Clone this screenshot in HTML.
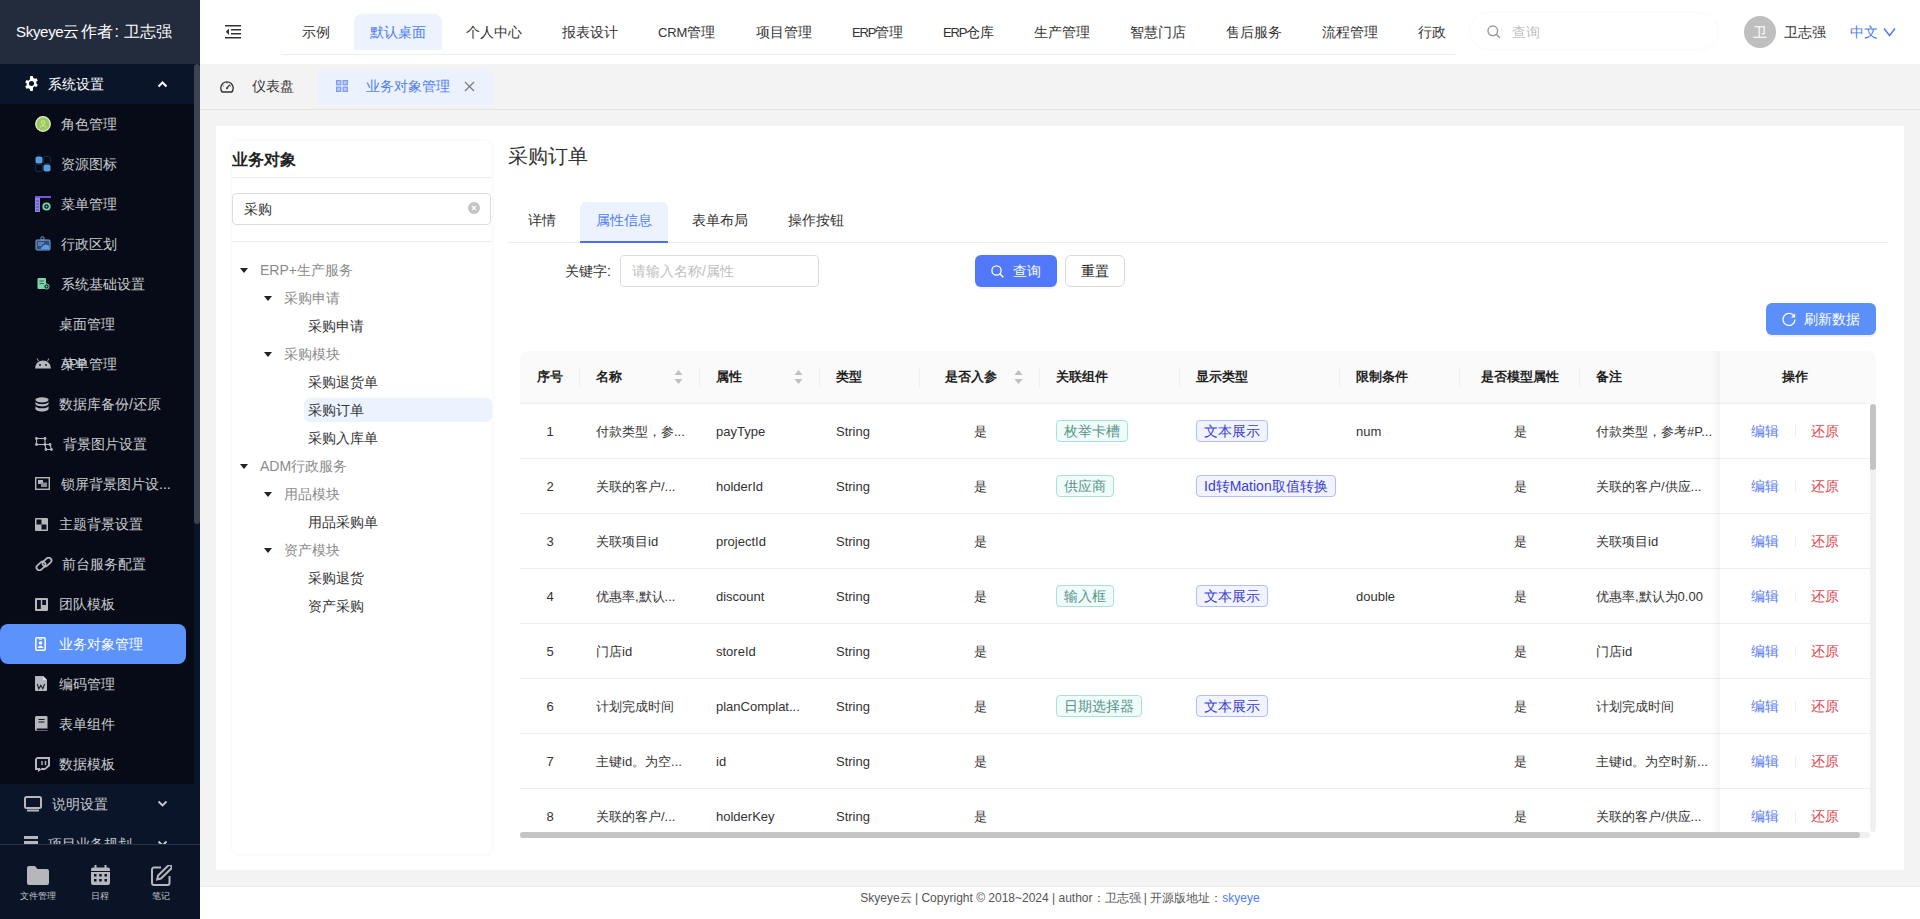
<!DOCTYPE html>
<html><head><meta charset="utf-8">
<style>
*{box-sizing:border-box;margin:0;padding:0}
html,body{width:1920px;height:919px;overflow:hidden;background:#f3f3f3;font-family:"Liberation Sans",sans-serif;font-size:14px;color:#333}
.a{position:absolute}
.t{position:absolute;white-space:nowrap;line-height:20px}
/* sidebar */
#side{position:absolute;left:0;top:0;width:200px;height:919px;background:#0a1529;overflow:hidden}
#logo{position:absolute;left:0;top:0;width:200px;height:64px;background:#232c3d;color:#fff;font-size:16px;line-height:64px;padding-left:16px;white-space:nowrap}
.sub{position:absolute;left:0;width:194px;background:#060b17}
.mi{position:absolute;left:0;width:194px;height:40px;color:#c9cbd0;font-size:14px;line-height:40px;white-space:nowrap}
.mi svg{position:absolute}
.mi span{position:absolute;top:0}
#sbthumb{position:absolute;left:194px;top:64px;width:6px;height:460px;background:#3c4350;border-radius:3px}
#sbot{position:absolute;left:0;top:844px;width:200px;height:75px;background:#0b1426;border-top:1px solid #283243}
.bi{position:absolute;top:21px;width:40px;text-align:center;color:#c3c6cc;font-size:9px}
/* header */
#hdr{position:absolute;left:200px;top:0;width:1720px;height:64px;background:#fff}
.nav{position:absolute;top:22px;font-size:14px;color:#333;line-height:20px;white-space:nowrap}
#tabs{position:absolute;left:200px;top:64px;width:1720px;height:46px;background:#f3f3f3;border-bottom:1px solid #e4e4e4}
#panel{position:absolute;left:216px;top:126px;width:1688px;height:744px;background:#fff}
#foot{position:absolute;left:200px;top:886px;width:1720px;height:33px;background:#fff;border-top:1px solid #ececec;text-align:center;font-size:12px;color:#555;line-height:22px}
</style></head>
<body>
<div id="side">
  <div id="logo"><span style="font-size:15px;letter-spacing:-.3px">Skyeye</span>云<span style="display:inline-block;width:2px"></span>作者<span style="display:inline-block;width:11px;padding-left:1px">:</span>卫志强</div>
  <!-- 系统设置 header -->
  <div class="mi" style="top:64px;color:#fff">
    <svg style="left:24px;top:12px" width="15" height="15" viewBox="0 0 16 16"><path fill="#fff" d="M6.6 0h2.8l.4 2.1a6 6 0 0 1 1.5.9l2-.7 1.4 2.4-1.6 1.4a6 6 0 0 1 0 1.8l1.6 1.4-1.4 2.4-2-.7a6 6 0 0 1-1.5.9L9.4 16H6.6l-.4-2.1a6 6 0 0 1-1.5-.9l-2 .7L1.3 11.3l1.6-1.4a6 6 0 0 1 0-1.8L1.3 6.7l1.4-2.4 2 .7a6 6 0 0 1 1.5-.9zM8 5.3a2.7 2.7 0 1 0 0 5.4 2.7 2.7 0 0 0 0-5.4z"/></svg>
    <span style="left:48px">系统设置</span>
    <svg style="left:157px;top:16px" width="11" height="8" viewBox="0 0 11 8"><path d="M1.5 6.5 5.5 2.5 9.5 6.5" stroke="#fff" stroke-width="2" fill="none"/></svg>
  </div>
  <div class="sub" style="top:104px;height:680px"></div>
  <div class="mi" style="top:104px"><svg style="left:35px;top:12px" width="16" height="16" viewBox="0 0 16 16"><circle cx="8" cy="8" r="7.3" fill="#9cc95c" stroke="#e8f2dc" stroke-width="1.2"/><circle cx="8" cy="6.5" r="1.8" fill="none" stroke="#dfeccb" stroke-width=".8"/><path d="M4.8 11.5q3.2-4 6.4 0" fill="none" stroke="#dfeccb" stroke-width=".8"/></svg><span style="left:61px">角色管理</span></div>
  <div class="mi" style="top:144px"><svg style="left:35px;top:12px" width="16" height="16" viewBox="0 0 16 16"><rect x=".5" y=".5" width="7" height="7" rx="2" fill="#5a9be0"/><rect x="8.5" y="8.5" width="7" height="7" rx="2" fill="#5a9be0"/><rect x="8.5" y=".5" width="7" height="7" rx="2" fill="none" stroke="#1f3350" stroke-width=".8"/><rect x=".5" y="8.5" width="7" height="7" rx="2" fill="none" stroke="#1f3350" stroke-width=".8"/></svg><span style="left:61px">资源图标</span></div>
  <div class="mi" style="top:184px"><svg style="left:35px;top:12px" width="16" height="16" viewBox="0 0 16 16"><rect x="0" y="0" width="16" height="2" fill="#7a55e0"/><rect x="0" y="2" width="5" height="14" fill="#8a86e8"/><path d="M1 5h3M1 8h3M1 11h3M1 14h3" stroke="#3b3b8c" stroke-width=".8"/><circle cx="11.5" cy="10.5" r="3.2" fill="none" stroke="#7ed6b2" stroke-width="1.8"/><circle cx="11.5" cy="10.5" r="1" fill="#7ed6b2"/></svg><span style="left:61px">菜单管理</span></div>
  <div class="mi" style="top:224px"><svg style="left:35px;top:12px" width="16" height="16" viewBox="0 0 16 16"><rect x="1" y="4" width="14" height="10" rx="1" fill="#2f4f7a" stroke="#7fa8e0" stroke-width="1"/><path d="M6 1h3v3H6z" fill="none" stroke="#7fa8e0" stroke-width=".8"/><path d="M6 12q4-6 8-2v3H6z" fill="#5b9ef0"/><path d="M3 7h6M3 9h4" stroke="#a8c6ef" stroke-width=".8"/></svg><span style="left:61px">行政区划</span></div>
  <div class="mi" style="top:264px"><svg style="left:37px;top:14px" width="13" height="12" viewBox="0 0 13 12"><rect x=".5" y="0" width="8.5" height="11" rx="1" fill="#7fd3ad"/><path d="M2.5 3h4.5M2.5 5.5h4.5" stroke="#2a5a48" stroke-width=".9"/><circle cx="9.5" cy="8.5" r="2.6" fill="#0f2a25" stroke="#7fd3ad" stroke-width="1"/><circle cx="9.5" cy="8.5" r=".9" fill="#7fd3ad"/></svg><span style="left:61px">系统基础设置</span></div>
  <div class="mi" style="top:304px"><span style="left:59px">桌面管理</span></div>
  <div class="mi" style="top:344px"><svg style="left:35px;top:14px" width="16" height="11" viewBox="0 0 16 11"><path d="M0 10.5A8 8 0 0 1 16 10.5z" fill="#b5b7bc"/><path d="M3.5 3.2 2.2 0.5M12.5 3.2 13.8 0.5" stroke="#b5b7bc" stroke-width="1"/><circle cx="5" cy="7" r=".9" fill="#0a1020"/><circle cx="11" cy="7" r=".9" fill="#0a1020"/></svg><span style="left:61px"><span style="font-size:13px;letter-spacing:-.3px">APP</span>菜单管理</span></div>
  <div class="mi" style="top:384px"><svg style="left:35px;top:13px" width="14" height="15" viewBox="0 0 14 15"><ellipse cx="7" cy="2.8" rx="6.6" ry="2.6" fill="#b5b7bc"/><path d="M.4 4.6v2.2c0 1.5 3 2.6 6.6 2.6s6.6-1.1 6.6-2.6V4.6C13.6 6.1 10.6 7.2 7 7.2S.4 6.1.4 4.6zM.4 8.7v3c0 1.5 3 2.7 6.6 2.7s6.6-1.2 6.6-2.7v-3c0 1.5-3 2.6-6.6 2.6S.4 10.2.4 8.7z" fill="#b5b7bc"/></svg><span style="left:59px">数据库备份/还原</span></div>
  <div class="mi" style="top:424px"><svg style="left:35px;top:13px" width="18" height="14" viewBox="0 0 18 14"><g fill="none" stroke="#b5b7bc" stroke-width="1.1"><rect x="1.5" y="1.5" width="8.5" height="6"/><path d="M10 7.5 11 12.5h5.5L15 7.5z"/></g><g fill="#b5b7bc"><circle cx="1.5" cy="1.5" r="1.4"/><circle cx="10" cy="1.5" r="1.4"/><circle cx="1.5" cy="7.5" r="1.4"/><circle cx="10" cy="7.5" r="1.4"/><circle cx="15" cy="7.5" r="1.4"/><circle cx="11" cy="12.5" r="1.4"/><circle cx="16.5" cy="12.5" r="1.4"/></g></svg><span style="left:63px">背景图片设置</span></div>
  <div class="mi" style="top:464px"><svg style="left:35px;top:13px" width="15" height="13" viewBox="0 0 15 13"><rect x=".7" y=".7" width="13.6" height="11.6" fill="none" stroke="#b5b7bc" stroke-width="1.4"/><rect x="3" y="3" width="5" height="4" fill="#b5b7bc"/><rect x="6" y="5.5" width="6" height="4.5" fill="#8a8d94"/></svg><span style="left:61px">锁屏背景图片设...</span></div>
  <div class="mi" style="top:504px"><svg style="left:35px;top:14px" width="13" height="13" viewBox="0 0 13 13"><rect width="13" height="13" rx="1" fill="#b5b7bc"/><rect x="1.5" y="1.5" width="5" height="5" fill="#0a1020"/><rect x="6.5" y="6.5" width="5" height="5" fill="#0a1020"/></svg><span style="left:59px">主题背景设置</span></div>
  <div class="mi" style="top:544px"><svg style="left:35px;top:13px" width="18" height="14" viewBox="0 0 18 14"><g fill="none" stroke="#b5b7bc" stroke-width="1.8"><rect x="1" y="6.2" width="10" height="5.6" rx="2.8" transform="rotate(-42 6 9)"/><rect x="7" y="2.2" width="10" height="5.6" rx="2.8" transform="rotate(-42 12 5)"/></g></svg><span style="left:62px">前台服务配置</span></div>
  <div class="mi" style="top:584px"><svg style="left:35px;top:14px" width="13" height="13" viewBox="0 0 13 13"><rect width="13" height="13" rx="1" fill="#b5b7bc"/><rect x="2" y="2" width="3.8" height="9" fill="#0a1020"/><rect x="7.2" y="2" width="3.8" height="5" fill="#0a1020"/></svg><span style="left:59px">团队模板</span></div>
  <div class="mi" style="top:624px;color:#fff"><div class="a" style="left:0;top:0;width:186px;height:40px;background:#5c92fb;border-radius:8px"></div><svg style="left:35px;top:13px" width="11" height="14" viewBox="0 0 11 14"><rect x=".8" y=".8" width="9.4" height="12.4" rx="1.2" fill="none" stroke="#fff" stroke-width="1.5"/><path d="M4 2.2h3" stroke="#fff" stroke-width="1"/><circle cx="5.5" cy="6" r="1.8" fill="#fff"/><path d="M2.3 11q3.2-4.5 6.4 0z" fill="#fff"/></svg><span style="left:59px">业务对象管理</span></div>
  <div class="mi" style="top:664px"><svg style="left:35px;top:12px" width="12" height="15" viewBox="0 0 12 15"><path d="M1 0h7l4 4v10a1 1 0 0 1-1 1H1a1 1 0 0 1-1-1V1a1 1 0 0 1 1-1z" fill="#b5b7bc"/><path d="M8 0v4h4" fill="#e2e3e6"/><path d="M2.3 8 3.8 12.8 5.8 9.3 7.8 12.8 9.6 8" fill="none" stroke="#1a1f2c" stroke-width="1.1"/></svg><span style="left:59px">编码管理</span></div>
  <div class="mi" style="top:704px"><svg style="left:35px;top:12px" width="13" height="15" viewBox="0 0 13 15"><path d="M1.5 0h10a1 1 0 0 1 1 1v11.5H2.5a1 1 0 0 0 0 2h10V15h-11A1.5 1.5 0 0 1 0 13.5v-12A1.5 1.5 0 0 1 1.5 0z" fill="#b5b7bc"/><path d="M3.5 3.5h6M3.5 6h6" stroke="#0a1020" stroke-width="1"/></svg><span style="left:59px">表单组件</span></div>
  <div class="mi" style="top:744px"><svg style="left:35px;top:13px" width="15" height="15" viewBox="0 0 15 15"><path d="M2 0h13v9l-5 4H6l-3 2v-2H0V2z" fill="#b5b7bc"/><path d="M2 2h11v6l-3 3H6.5L5 12.5V11H2z" fill="#0a1020"/><path d="M7 4v4M10.5 4v4" stroke="#b5b7bc" stroke-width="1.4"/></svg><span style="left:59px">数据模板</span></div>
  <div class="mi" style="top:784px">
    <svg style="left:24px;top:12px" width="18" height="16" viewBox="0 0 18 16"><rect x="1" y="1" width="16" height="11" rx="1.5" fill="none" stroke="#b5b7bc" stroke-width="2"/><rect x="3" y="13.5" width="12" height="2" fill="#b5b7bc"/></svg>
    <span style="left:52px">说明设置</span>
    <svg style="left:157px;top:16px" width="11" height="8" viewBox="0 0 11 8"><path d="M1.5 1.5 5.5 5.5 9.5 1.5" stroke="#c9cbd0" stroke-width="1.8" fill="none"/></svg>
  </div>
  <div class="mi" style="top:824px">
    <svg style="left:24px;top:12px" width="14" height="16" viewBox="0 0 14 16"><rect x="0" y="0" width="14" height="3" fill="#b5b7bc"/><rect x="0" y="5" width="14" height="10" fill="#b5b7bc"/></svg>
    <span style="left:48px">项目业务规划</span>
    <svg style="left:157px;top:16px" width="11" height="8" viewBox="0 0 11 8"><path d="M1.5 1.5 5.5 5.5 9.5 1.5" stroke="#c9cbd0" stroke-width="1.8" fill="none"/></svg>
  </div>
  <div id="sbthumb"></div>
  <div id="sbot">
    <div class="bi" style="left:18px"><svg width="22" height="19" viewBox="0 0 22 19"><path d="M2 0h6l2.5 3H20a2 2 0 0 1 2 2v12a2 2 0 0 1-2 2H2a2 2 0 0 1-2-2V2a2 2 0 0 1 2-2z" fill="#b5b7bc"/></svg><div style="margin-top:3px;line-height:12px">文件管理</div></div>
    <div class="bi" style="left:80px;top:20px"><svg width="19" height="20" viewBox="0 0 19 20"><rect x="3.5" y="0" width="2" height="4" fill="#b5b7bc"/><rect x="13.5" y="0" width="2" height="4" fill="#b5b7bc"/><rect x="0" y="2.5" width="19" height="17.5" rx="2" fill="#b5b7bc"/><rect x="0" y="6" width="19" height="1" fill="#0b1426"/><g fill="#0b1426"><rect x="3" y="9" width="2.5" height="2.5"/><rect x="8.2" y="9" width="2.5" height="2.5"/><rect x="13.5" y="9" width="2.5" height="2.5"/><rect x="3" y="14" width="2.5" height="2.5"/><rect x="8.2" y="14" width="2.5" height="2.5"/><rect x="13.5" y="14" width="2.5" height="2.5"/></g></svg><div style="margin-top:3px;line-height:12px">日程</div></div>
    <div class="bi" style="left:141px;top:20px"><svg width="21" height="21" viewBox="0 0 21 21"><path d="M10 2.5H3a2 2 0 0 0-2 2V18a2 2 0 0 0 2 2h13.5a2 2 0 0 0 2-2v-7" fill="none" stroke="#b5b7bc" stroke-width="2"/><path d="M17 .8a2 2 0 0 1 3 3L10 13.5l-3.8.9.9-3.8z" fill="none" stroke="#b5b7bc" stroke-width="2"/></svg><div style="margin-top:2px;line-height:12px">笔记</div></div>
  </div>
</div>
<div id="hdr">
  <svg class="a" style="left:25px;top:25px" width="16" height="14" viewBox="0 0 16 14"><path d="M0 .75h16M6 4.75h10M6 8.75h10M0 12.75h16" stroke="#333" stroke-width="1.5"/><path d="M4 3.5 0.8 6.75 4 10z" fill="#333"/></svg>
  <div class="a" style="left:82px;top:54px;width:1173px;height:1px;background:#ececec"></div>
  <div class="a" style="left:154px;top:14px;width:88px;height:36px;background:#ecf3fe;border-radius:8px 8px 0 0"></div>
  <div class="nav" style="left:102px">示例</div>
  <div class="nav" style="left:170px;color:#4e7cf5">默认桌面</div>
  <div class="nav" style="left:266px">个人中心</div>
  <div class="nav" style="left:362px">报表设计</div>
  <div class="nav" style="left:458px"><span style="font-size:13px;letter-spacing:-.1px">CRM</span>管理</div>
  <div class="nav" style="left:556px">项目管理</div>
  <div class="nav" style="left:652px"><span style="font-size:13px;letter-spacing:-1.2px">ERP</span>管理</div>
  <div class="nav" style="left:743px"><span style="font-size:13px;letter-spacing:-1.2px">ERP</span>仓库</div>
  <div class="nav" style="left:834px">生产管理</div>
  <div class="nav" style="left:930px">智慧门店</div>
  <div class="nav" style="left:1026px">售后服务</div>
  <div class="nav" style="left:1122px">流程管理</div>
  <div class="nav" style="left:1218px">行政</div>
  <div class="a" style="left:1269px;top:12px;width:250px;height:38px;border:1px solid #fafafa;border-radius:19px"></div>
  <svg class="a" style="left:1287px;top:25px" width="14" height="14" viewBox="0 0 14 14"><circle cx="5.8" cy="5.8" r="4.8" fill="none" stroke="#999" stroke-width="1.4"/><path d="M9.3 9.3 13 13" stroke="#999" stroke-width="1.5"/></svg>
  <div class="nav" style="left:1312px;color:#c0c0c0">查询</div>
  <div class="a" style="left:1544px;top:16px;width:32px;height:32px;border-radius:50%;background:#bfbfbf;color:#fff;text-align:center;line-height:32px;font-size:14px">卫</div>
  <div class="nav" style="left:1584px">卫志强</div>
  <div class="nav" style="left:1650px;color:#4e7cf5">中文</div>
  <svg class="a" style="left:1683px;top:27px" width="13" height="10" viewBox="0 0 13 10"><path d="M1 1.5 6.5 8.5 12 1.5" stroke="#4e7cf5" stroke-width="1.5" fill="none"/></svg>
</div>
<div id="tabs">
  <svg class="a" style="left:20px;top:16px" width="14" height="13" viewBox="0 0 14 13"><path d="M2.2 12A6.2 6.2 0 1 1 11.8 12z" fill="none" stroke="#333" stroke-width="1.3"/><path d="M7 8.2 9.8 4.6" stroke="#333" stroke-width="1.3"/><circle cx="7" cy="8.2" r="1" fill="#333"/><path d="M7 2.2v1.2M2.8 5.5l.9.6M11.2 5.5l-.9.6" stroke="#333" stroke-width="1"/></svg>
  <div class="nav" style="left:52px;top:12px">仪表盘</div>
  <div class="a" style="left:118px;top:5px;width:176px;height:36px;background:#ebf2fe;border-radius:8px 8px 0 0"></div>
  <svg class="a" style="left:136px;top:16px" width="12" height="12" viewBox="0 0 12 12"><g fill="#b9cbfa" stroke="#7c9bf6" stroke-width="1.2"><rect x=".6" y=".6" width="4.2" height="4.2"/><rect x="7.2" y=".6" width="4.2" height="4.2"/><rect x=".6" y="7.2" width="4.2" height="4.2"/><rect x="7.2" y="7.2" width="4.2" height="4.2"/></g></svg>
  <div class="nav" style="left:166px;top:12px;color:#4e7cf5">业务对象管理</div>
  <svg class="a" style="left:264px;top:17px" width="11" height="11" viewBox="0 0 11 11"><path d="M1 1 10 10M10 1 1 10" stroke="#7a7a7a" stroke-width="1.2"/></svg>
</div>
<div id="panel">
  <div class="a" style="left:16px;top:15px;width:260px;height:713px;background:#fff;border-radius:8px;box-shadow:0 0 4px rgba(0,0,0,.06);overflow:hidden">
    <div class="t" style="left:0;top:7px;font-size:16px;font-weight:bold;color:#222;line-height:24px">业务对象</div>
    <div class="a" style="left:0;top:36px;width:260px;height:1px;background:#ececec"></div>
    <div class="a" style="left:0;top:52px;width:259px;height:32px;border:1px solid #dcdcdc;border-radius:4px"></div>
    <div class="t" style="left:12px;top:58px;color:#333">采购</div>
    <svg class="a" style="left:236px;top:61px" width="12" height="12" viewBox="0 0 12 12"><circle cx="6" cy="6" r="6" fill="#c4c4c4"/><path d="M4 4l4 4M8 4 4 8" stroke="#fff" stroke-width="1.1"/></svg>
    <div class="a" style="left:0;top:100px;width:260px;height:1px;background:#ececec"></div>
  </div>
  <div class="a" style="left:88px;top:272px;width:188px;height:24px;background:#ebf3fe;border-radius:6px"></div>
  <svg class="a" style="left:24px;top:142px" width="8" height="5" viewBox="0 0 8 5"><path d="M0 0h8L4 5z" fill="#222"/></svg>
  <div class="t" style="left:44px;top:134px;color:#8a8a8a">ERP+生产服务</div>
  <svg class="a" style="left:48px;top:170px" width="8" height="5" viewBox="0 0 8 5"><path d="M0 0h8L4 5z" fill="#222"/></svg>
  <div class="t" style="left:68px;top:162px;color:#8a8a8a">采购申请</div>
  <div class="t" style="left:92px;top:190px;color:#333">采购申请</div>
  <svg class="a" style="left:48px;top:226px" width="8" height="5" viewBox="0 0 8 5"><path d="M0 0h8L4 5z" fill="#222"/></svg>
  <div class="t" style="left:68px;top:218px;color:#8a8a8a">采购模块</div>
  <div class="t" style="left:92px;top:246px;color:#333">采购退货单</div>
  <div class="t" style="left:92px;top:274px;color:#333">采购订单</div>
  <div class="t" style="left:92px;top:302px;color:#333">采购入库单</div>
  <svg class="a" style="left:24px;top:338px" width="8" height="5" viewBox="0 0 8 5"><path d="M0 0h8L4 5z" fill="#222"/></svg>
  <div class="t" style="left:44px;top:330px;color:#8a8a8a">ADM行政服务</div>
  <svg class="a" style="left:48px;top:366px" width="8" height="5" viewBox="0 0 8 5"><path d="M0 0h8L4 5z" fill="#222"/></svg>
  <div class="t" style="left:68px;top:358px;color:#8a8a8a">用品模块</div>
  <div class="t" style="left:92px;top:386px;color:#333">用品采购单</div>
  <svg class="a" style="left:48px;top:422px" width="8" height="5" viewBox="0 0 8 5"><path d="M0 0h8L4 5z" fill="#222"/></svg>
  <div class="t" style="left:68px;top:414px;color:#8a8a8a">资产模块</div>
  <div class="t" style="left:92px;top:442px;color:#333">采购退货</div>
  <div class="t" style="left:92px;top:470px;color:#333">资产采购</div>
  <div class="t" style="left:292px;top:16px;font-size:20px;line-height:28px;color:#333">采购订单</div>
  <div class="a" style="left:364px;top:76px;width:88px;height:40px;background:#ecf3fe;border-radius:6px 6px 0 0"></div>
  <div class="a" style="left:292px;top:116px;width:1380px;height:1px;background:#ececec"></div>
  <div class="a" style="left:364px;top:115px;width:88px;height:2px;background:#4e6ef2"></div>
  <div class="t" style="left:312px;top:84px">详情</div>
  <div class="t" style="left:380px;top:84px;color:#4e7cf5">属性信息</div>
  <div class="t" style="left:476px;top:84px">表单布局</div>
  <div class="t" style="left:572px;top:84px">操作按钮</div>
  <div class="t" style="left:349px;top:135px">关键字:</div>
  <div class="a" style="left:404px;top:129px;width:199px;height:32px;border:1px solid #dcdcdc;border-radius:4px"></div>
  <div class="t" style="left:416px;top:135px;color:#c0c0c0">请输入名称/属性</div>
  <div class="a" style="left:759px;top:129px;width:82px;height:32px;background:#5078f8;border-radius:6px;box-shadow:0 2px 0 rgba(80,120,248,.08)"></div>
  <svg class="a" style="left:775px;top:139px" width="13" height="13" viewBox="0 0 13 13"><circle cx="5.5" cy="5.5" r="4.6" fill="none" stroke="#fff" stroke-width="1.3"/><path d="M8.8 8.8 12.3 12.3" stroke="#fff" stroke-width="1.4"/></svg>
  <div class="t" style="left:797px;top:135px;color:#fff">查询</div>
  <div class="a" style="left:849px;top:129px;width:60px;height:32px;border:1px solid #d9d9d9;border-radius:6px"></div>
  <div class="t" style="left:865px;top:135px;color:#222">重置</div>
  <div class="a" style="left:1550px;top:177px;width:110px;height:32px;background:#5b90fa;border-radius:6px;box-shadow:0 2px 0 rgba(80,120,248,.08)"></div>
  <svg class="a" style="left:1566px;top:186px" width="14" height="14" viewBox="0 0 14 14"><path d="M12.3 4.6A6 6 0 1 0 13 7.6" fill="none" stroke="#fff" stroke-width="1.3"/><path d="M13.2 1.2v4.2H9z" fill="#fff"/></svg>
  <div class="t" style="left:1588px;top:183px;color:#fff">刷新数据</div>
<!--TABLE-->
  <div class="a" style="left:304px;top:225px;width:1356px;height:488px;overflow:hidden;font-size:13px">
  <div class="a" style="left:0;top:0;width:1350px;height:52px;background:#fafafa;border-radius:8px 0 0 0"></div>
  <div class="a" style="left:0;top:52px;width:1350px;height:1px;background:#efefef"></div>
  <div class="a" style="left:59px;top:16px;width:1px;height:21px;background:#efefef"></div>
  <div class="a" style="left:179px;top:16px;width:1px;height:21px;background:#efefef"></div>
  <div class="a" style="left:299px;top:16px;width:1px;height:21px;background:#efefef"></div>
  <div class="a" style="left:399px;top:16px;width:1px;height:21px;background:#efefef"></div>
  <div class="a" style="left:519px;top:16px;width:1px;height:21px;background:#efefef"></div>
  <div class="a" style="left:659px;top:16px;width:1px;height:21px;background:#efefef"></div>
  <div class="a" style="left:819px;top:16px;width:1px;height:21px;background:#efefef"></div>
  <div class="a" style="left:939px;top:16px;width:1px;height:21px;background:#efefef"></div>
  <div class="a" style="left:1059px;top:16px;width:1px;height:21px;background:#efefef"></div>
  <div class="t" style="left:-70px;width:200px;text-align:center;top:16px;color:#1f1f1f;font-weight:bold">序号</div>
  <div class="t" style="left:76px;top:16px;color:#1f1f1f;font-weight:bold">名称</div>
  <div class="t" style="left:196px;top:16px;color:#1f1f1f;font-weight:bold">属性</div>
  <div class="t" style="left:316px;top:16px;color:#1f1f1f;font-weight:bold">类型</div>
  <div class="t" style="left:351px;width:200px;text-align:center;top:16px;color:#1f1f1f;font-weight:bold">是否入参</div>
  <div class="t" style="left:536px;top:16px;color:#1f1f1f;font-weight:bold">关联组件</div>
  <div class="t" style="left:676px;top:16px;color:#1f1f1f;font-weight:bold">显示类型</div>
  <div class="t" style="left:836px;top:16px;color:#1f1f1f;font-weight:bold">限制条件</div>
  <div class="t" style="left:900px;width:200px;text-align:center;top:16px;color:#1f1f1f;font-weight:bold">是否模型属性</div>
  <div class="t" style="left:1076px;top:16px;color:#1f1f1f;font-weight:bold">备注</div>
  <svg class="a" style="left:154px;top:19px" width="9" height="14" viewBox="0 0 9 14"><path d="M4.5 0 8.5 5H.5z" fill="#bfbfbf"/><path d="M4.5 14 8.5 9H.5z" fill="#bfbfbf"/></svg>
  <svg class="a" style="left:274px;top:19px" width="9" height="14" viewBox="0 0 9 14"><path d="M4.5 0 8.5 5H.5z" fill="#bfbfbf"/><path d="M4.5 14 8.5 9H.5z" fill="#bfbfbf"/></svg>
  <svg class="a" style="left:494px;top:19px" width="9" height="14" viewBox="0 0 9 14"><path d="M4.5 0 8.5 5H.5z" fill="#bfbfbf"/><path d="M4.5 14 8.5 9H.5z" fill="#bfbfbf"/></svg>
  <div class="a" style="left:0;top:107px;width:1350px;height:1px;background:#efefef"></div>
  <div class="t" style="left:-70px;width:200px;text-align:center;top:71px;color:#333;">1</div>
  <div class="t" style="left:76px;top:71px;color:#333;">付款类型，参...</div>
  <div class="t" style="left:196px;top:71px;color:#333;">payType</div>
  <div class="t" style="left:316px;top:71px;color:#333;">String</div>
  <div class="t" style="left:360px;width:200px;text-align:center;top:71px;color:#333;">是</div>
  <div class="a" style="left:536px;top:69px;height:22px;padding:0 7px;border:1px solid #a6e2d6;background:#effcf9;border-radius:4px;color:#58938a;font-size:14px;line-height:20px;white-space:nowrap">枚举卡槽</div>
  <div class="a" style="left:676px;top:69px;height:22px;padding:0 7px;border:1px solid #b3bcf7;background:#f1f3ff;border-radius:4px;color:#3b3dcf;font-size:14px;line-height:20px;white-space:nowrap">文本展示</div>
  <div class="t" style="left:836px;top:71px;color:#333;">num</div>
  <div class="t" style="left:900px;width:200px;text-align:center;top:71px;color:#333;">是</div>
  <div class="t" style="left:1076px;top:71px;color:#333;">付款类型，参考#P...</div>
  <div class="a" style="left:0;top:162px;width:1350px;height:1px;background:#efefef"></div>
  <div class="t" style="left:-70px;width:200px;text-align:center;top:126px;color:#333;">2</div>
  <div class="t" style="left:76px;top:126px;color:#333;">关联的客户/...</div>
  <div class="t" style="left:196px;top:126px;color:#333;">holderId</div>
  <div class="t" style="left:316px;top:126px;color:#333;">String</div>
  <div class="t" style="left:360px;width:200px;text-align:center;top:126px;color:#333;">是</div>
  <div class="a" style="left:536px;top:124px;height:22px;padding:0 7px;border:1px solid #a6e2d6;background:#effcf9;border-radius:4px;color:#58938a;font-size:14px;line-height:20px;white-space:nowrap">供应商</div>
  <div class="a" style="left:676px;top:124px;height:22px;padding:0 7px;border:1px solid #b3bcf7;background:#f1f3ff;border-radius:4px;color:#3b3dcf;font-size:14px;line-height:20px;white-space:nowrap">Id转Mation取值转换</div>
  <div class="t" style="left:900px;width:200px;text-align:center;top:126px;color:#333;">是</div>
  <div class="t" style="left:1076px;top:126px;color:#333;">关联的客户/供应...</div>
  <div class="a" style="left:0;top:217px;width:1350px;height:1px;background:#efefef"></div>
  <div class="t" style="left:-70px;width:200px;text-align:center;top:181px;color:#333;">3</div>
  <div class="t" style="left:76px;top:181px;color:#333;">关联项目id</div>
  <div class="t" style="left:196px;top:181px;color:#333;">projectId</div>
  <div class="t" style="left:316px;top:181px;color:#333;">String</div>
  <div class="t" style="left:360px;width:200px;text-align:center;top:181px;color:#333;">是</div>
  <div class="t" style="left:900px;width:200px;text-align:center;top:181px;color:#333;">是</div>
  <div class="t" style="left:1076px;top:181px;color:#333;">关联项目id</div>
  <div class="a" style="left:0;top:272px;width:1350px;height:1px;background:#efefef"></div>
  <div class="t" style="left:-70px;width:200px;text-align:center;top:236px;color:#333;">4</div>
  <div class="t" style="left:76px;top:236px;color:#333;">优惠率,默认...</div>
  <div class="t" style="left:196px;top:236px;color:#333;">discount</div>
  <div class="t" style="left:316px;top:236px;color:#333;">String</div>
  <div class="t" style="left:360px;width:200px;text-align:center;top:236px;color:#333;">是</div>
  <div class="a" style="left:536px;top:234px;height:22px;padding:0 7px;border:1px solid #a6e2d6;background:#effcf9;border-radius:4px;color:#58938a;font-size:14px;line-height:20px;white-space:nowrap">输入框</div>
  <div class="a" style="left:676px;top:234px;height:22px;padding:0 7px;border:1px solid #b3bcf7;background:#f1f3ff;border-radius:4px;color:#3b3dcf;font-size:14px;line-height:20px;white-space:nowrap">文本展示</div>
  <div class="t" style="left:836px;top:236px;color:#333;">double</div>
  <div class="t" style="left:900px;width:200px;text-align:center;top:236px;color:#333;">是</div>
  <div class="t" style="left:1076px;top:236px;color:#333;">优惠率,默认为0.00</div>
  <div class="a" style="left:0;top:327px;width:1350px;height:1px;background:#efefef"></div>
  <div class="t" style="left:-70px;width:200px;text-align:center;top:291px;color:#333;">5</div>
  <div class="t" style="left:76px;top:291px;color:#333;">门店id</div>
  <div class="t" style="left:196px;top:291px;color:#333;">storeId</div>
  <div class="t" style="left:316px;top:291px;color:#333;">String</div>
  <div class="t" style="left:360px;width:200px;text-align:center;top:291px;color:#333;">是</div>
  <div class="t" style="left:900px;width:200px;text-align:center;top:291px;color:#333;">是</div>
  <div class="t" style="left:1076px;top:291px;color:#333;">门店id</div>
  <div class="a" style="left:0;top:382px;width:1350px;height:1px;background:#efefef"></div>
  <div class="t" style="left:-70px;width:200px;text-align:center;top:346px;color:#333;">6</div>
  <div class="t" style="left:76px;top:346px;color:#333;">计划完成时间</div>
  <div class="t" style="left:196px;top:346px;color:#333;">planComplat...</div>
  <div class="t" style="left:316px;top:346px;color:#333;">String</div>
  <div class="t" style="left:360px;width:200px;text-align:center;top:346px;color:#333;">是</div>
  <div class="a" style="left:536px;top:344px;height:22px;padding:0 7px;border:1px solid #a6e2d6;background:#effcf9;border-radius:4px;color:#58938a;font-size:14px;line-height:20px;white-space:nowrap">日期选择器</div>
  <div class="a" style="left:676px;top:344px;height:22px;padding:0 7px;border:1px solid #b3bcf7;background:#f1f3ff;border-radius:4px;color:#3b3dcf;font-size:14px;line-height:20px;white-space:nowrap">文本展示</div>
  <div class="t" style="left:900px;width:200px;text-align:center;top:346px;color:#333;">是</div>
  <div class="t" style="left:1076px;top:346px;color:#333;">计划完成时间</div>
  <div class="a" style="left:0;top:437px;width:1350px;height:1px;background:#efefef"></div>
  <div class="t" style="left:-70px;width:200px;text-align:center;top:401px;color:#333;">7</div>
  <div class="t" style="left:76px;top:401px;color:#333;">主键id。为空...</div>
  <div class="t" style="left:196px;top:401px;color:#333;">id</div>
  <div class="t" style="left:316px;top:401px;color:#333;">String</div>
  <div class="t" style="left:360px;width:200px;text-align:center;top:401px;color:#333;">是</div>
  <div class="t" style="left:900px;width:200px;text-align:center;top:401px;color:#333;">是</div>
  <div class="t" style="left:1076px;top:401px;color:#333;">主键id。为空时新...</div>
  <div class="a" style="left:0;top:492px;width:1350px;height:1px;background:#efefef"></div>
  <div class="t" style="left:-70px;width:200px;text-align:center;top:456px;color:#333;">8</div>
  <div class="t" style="left:76px;top:456px;color:#333;">关联的客户/...</div>
  <div class="t" style="left:196px;top:456px;color:#333;">holderKey</div>
  <div class="t" style="left:316px;top:456px;color:#333;">String</div>
  <div class="t" style="left:360px;width:200px;text-align:center;top:456px;color:#333;">是</div>
  <div class="t" style="left:900px;width:200px;text-align:center;top:456px;color:#333;">是</div>
  <div class="t" style="left:1076px;top:456px;color:#333;">关联的客户/供应...</div>
  <div class="a" style="left:1190px;top:0;width:10px;height:481px;background:linear-gradient(to right,rgba(0,0,0,0),rgba(0,0,0,.035))"></div>
  <div class="a" style="left:1200px;top:0;width:150px;height:481px;background:#fff"></div>
  <div class="a" style="left:1200px;top:0;width:156px;height:52px;background:#fafafa;border-radius:0 8px 0 0"></div>
  <div class="a" style="left:1200px;top:52px;width:150px;height:1px;background:#efefef"></div>
  <div class="t" style="left:1175px;width:200px;text-align:center;top:16px;color:#1f1f1f;font-weight:bold">操作</div>
  <div class="a" style="left:1200px;top:107px;width:150px;height:1px;background:#efefef"></div>
  <div class="t" style="left:1231px;top:70px;color:#5b7cf5;font-size:14px">编辑</div>
  <div class="a" style="left:1275px;top:75px;width:1px;height:11px;background:#eee"></div>
  <div class="t" style="left:1291px;top:70px;color:#e0464e;font-size:14px">还原</div>
  <div class="a" style="left:1200px;top:162px;width:150px;height:1px;background:#efefef"></div>
  <div class="t" style="left:1231px;top:125px;color:#5b7cf5;font-size:14px">编辑</div>
  <div class="a" style="left:1275px;top:130px;width:1px;height:11px;background:#eee"></div>
  <div class="t" style="left:1291px;top:125px;color:#e0464e;font-size:14px">还原</div>
  <div class="a" style="left:1200px;top:217px;width:150px;height:1px;background:#efefef"></div>
  <div class="t" style="left:1231px;top:180px;color:#5b7cf5;font-size:14px">编辑</div>
  <div class="a" style="left:1275px;top:185px;width:1px;height:11px;background:#eee"></div>
  <div class="t" style="left:1291px;top:180px;color:#e0464e;font-size:14px">还原</div>
  <div class="a" style="left:1200px;top:272px;width:150px;height:1px;background:#efefef"></div>
  <div class="t" style="left:1231px;top:235px;color:#5b7cf5;font-size:14px">编辑</div>
  <div class="a" style="left:1275px;top:240px;width:1px;height:11px;background:#eee"></div>
  <div class="t" style="left:1291px;top:235px;color:#e0464e;font-size:14px">还原</div>
  <div class="a" style="left:1200px;top:327px;width:150px;height:1px;background:#efefef"></div>
  <div class="t" style="left:1231px;top:290px;color:#5b7cf5;font-size:14px">编辑</div>
  <div class="a" style="left:1275px;top:295px;width:1px;height:11px;background:#eee"></div>
  <div class="t" style="left:1291px;top:290px;color:#e0464e;font-size:14px">还原</div>
  <div class="a" style="left:1200px;top:382px;width:150px;height:1px;background:#efefef"></div>
  <div class="t" style="left:1231px;top:345px;color:#5b7cf5;font-size:14px">编辑</div>
  <div class="a" style="left:1275px;top:350px;width:1px;height:11px;background:#eee"></div>
  <div class="t" style="left:1291px;top:345px;color:#e0464e;font-size:14px">还原</div>
  <div class="a" style="left:1200px;top:437px;width:150px;height:1px;background:#efefef"></div>
  <div class="t" style="left:1231px;top:400px;color:#5b7cf5;font-size:14px">编辑</div>
  <div class="a" style="left:1275px;top:405px;width:1px;height:11px;background:#eee"></div>
  <div class="t" style="left:1291px;top:400px;color:#e0464e;font-size:14px">还原</div>
  <div class="a" style="left:1200px;top:492px;width:150px;height:1px;background:#efefef"></div>
  <div class="t" style="left:1231px;top:455px;color:#5b7cf5;font-size:14px">编辑</div>
  <div class="a" style="left:1275px;top:460px;width:1px;height:11px;background:#eee"></div>
  <div class="t" style="left:1291px;top:455px;color:#e0464e;font-size:14px">还原</div>
  <div class="a" style="left:1350px;top:53px;width:6px;height:428px;background:#f0f0f0;border-radius:3px"></div>
  <div class="a" style="left:1350px;top:53px;width:6px;height:66px;background:#c4c4c4;border-radius:3px"></div>
  <div class="a" style="left:0;top:481px;width:1350px;height:6px;background:#f0f0f0;border-radius:3px"></div>
  <div class="a" style="left:0;top:481px;width:1340px;height:6px;background:#c4c4c4;border-radius:3px"></div>
  </div>
<!--/TABLE-->
</div>
<div id="foot">Skyeye云 | Copyright © 2018~2024 | author：卫志强 | 开源版地址：<span style="color:#4e7cf5">skyeye</span></div>
</body></html>
